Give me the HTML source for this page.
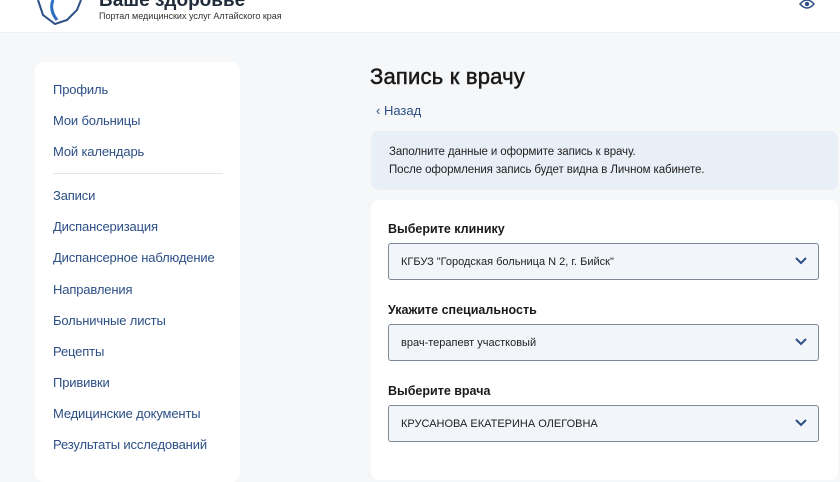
<!DOCTYPE html><html><head><meta charset="utf-8"><style>
*{margin:0;padding:0;box-sizing:border-box}
body{width:840px;height:468px;overflow:hidden;background:#f6f7f9;font-family:"Liberation Sans",sans-serif;position:relative}
.hdr{position:absolute;left:0;top:0;width:840px;height:33px;background:#fff;border-bottom:1px solid #eceef1}
.t1{position:absolute;left:99px;top:-10px;font-size:19px;font-weight:bold;color:#1f2b3a}
.t2{position:absolute;left:99px;top:11px;font-size:9px;color:#333}
.side{position:absolute;left:35px;top:62px;width:205px;height:420px;background:#fff;border-radius:8px}
.side a{position:absolute;left:18px;font-size:13px;color:#2c4f86;text-decoration:none;white-space:nowrap;letter-spacing:-0.15px}
.div{position:absolute;left:18px;top:111px;width:170px;height:1px;background:#e2e5ea}
h1{position:absolute;left:370px;top:64px;font-size:22px;font-weight:normal;color:#1a1a1a;-webkit-text-stroke:0.5px #1a1a1a;letter-spacing:0.2px}
.back{position:absolute;left:376px;top:103px;font-size:13px;color:#2c4f86}
.info{position:absolute;left:371px;top:131px;width:467px;height:59px;background:#e9eff7;border-radius:8px;font-size:11.5px;color:#222;padding:12px 0 0 18px;line-height:18px;letter-spacing:-0.1px}
.card{position:absolute;left:371px;top:200px;width:467px;height:280px;background:#fff;border-radius:8px}
.lbl{position:absolute;left:17px;font-size:12.5px;font-weight:bold;color:#1a1a1a}
.inp{position:absolute;left:17px;width:431px;height:37px;background:#f2f5f9;border:1px solid #7d8896;border-radius:3px;font-size:11px;color:#222;padding:12px 0 0 12px}
.inp svg{position:absolute;right:11px;top:13px}
</style></head><body>
<div class="hdr">
<svg style="position:absolute;left:35px;top:0" width="50" height="25" viewBox="0 0 50 25"><path d="M3 0 L8 15 L20 24 L32 20 L42 10 L46 0" fill="none" stroke="#2c4f86" stroke-width="2"/><path d="M18 0 Q14 10 22 20" fill="none" stroke="#2c6fc0" stroke-width="3"/></svg>
<div class="t1">Ваше здоровье</div>
<div class="t2">Портал медицинских услуг Алтайского края</div>
<svg style="position:absolute;left:799px;top:0" width="16" height="10" viewBox="0 0 16 10"><path d="M1 4 Q8 -4 15 4 Q8 12 1 4Z" fill="none" stroke="#2c4f86" stroke-width="1.5"/><circle cx="8" cy="4" r="2.2" fill="#2c4f86"/></svg>
</div>
<div class="side">
<a style="top:20px">Профиль</a><a style="top:51px">Мои больницы</a><a style="top:82px">Мой календарь</a>
<div class="div"></div>
<a style="top:126px">Записи</a><a style="top:157px">Диспансеризация</a><a style="top:188px">Диспансерное наблюдение</a><a style="top:220px">Направления</a><a style="top:251px">Больничные листы</a><a style="top:282px">Рецепты</a><a style="top:313px">Прививки</a><a style="top:344px">Медицинские документы</a><a style="top:375px">Результаты исследований</a>
</div>
<h1>Запись к врачу</h1>
<div class="back">‹ Назад</div>
<div class="info">Заполните данные и оформите запись к врачу.<br>После оформления запись будет видна в Личном кабинете.</div>
<div class="card">
<div class="lbl" style="top:22px">Выберите клинику</div>
<div class="inp" style="top:43px">КГБУЗ "Городская больница N 2, г. Бийск"<svg width="12" height="8" viewBox="0 0 12 8"><path d="M1 1 L6 6 L11 1" fill="none" stroke="#2c4f86" stroke-width="2"/></svg></div>
<div class="lbl" style="top:103px">Укажите специальность</div>
<div class="inp" style="top:124px">врач-терапевт участковый<svg width="12" height="8" viewBox="0 0 12 8"><path d="M1 1 L6 6 L11 1" fill="none" stroke="#2c4f86" stroke-width="2"/></svg></div>
<div class="lbl" style="top:184px">Выберите врача</div>
<div class="inp" style="top:205px">КРУСАНОВА ЕКАТЕРИНА ОЛЕГОВНА<svg width="12" height="8" viewBox="0 0 12 8"><path d="M1 1 L6 6 L11 1" fill="none" stroke="#2c4f86" stroke-width="2"/></svg></div>
</div>
</body></html>
